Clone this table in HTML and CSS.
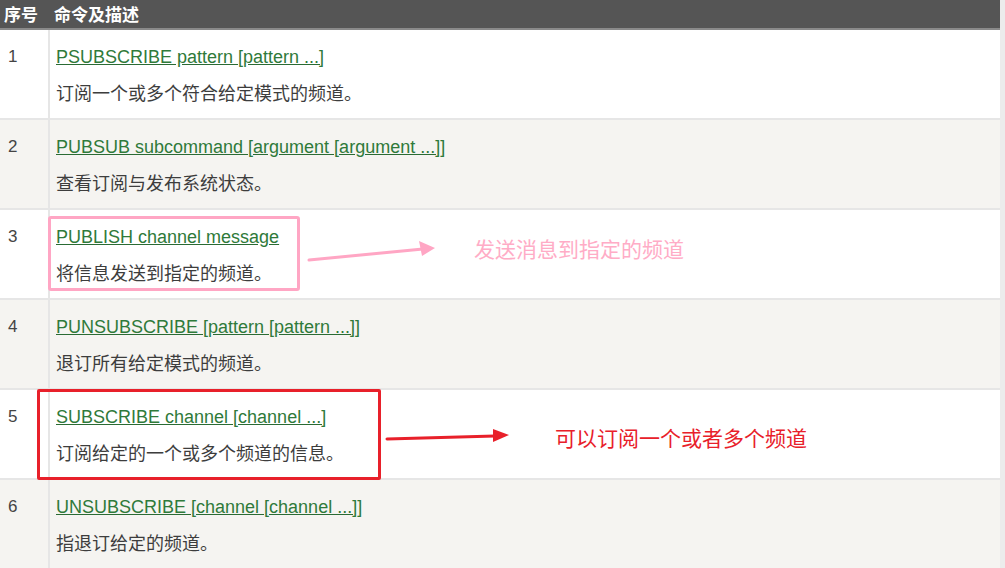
FILE: index.html
```html
<!DOCTYPE html>
<html lang="zh">
<head>
<meta charset="utf-8">
<link rel="stylesheet" href="styles.css">
</head>
<body>
<div class="page">
  <table class="cmds">
    <thead>
      <tr><th class="num">序号</th><th>命令及描述</th></tr>
    </thead>
    <tbody>
      <tr><td class="num">1</td><td><a href="#">PSUBSCRIBE pattern [pattern ...]</a><p>订阅一个或多个符合给定模式的频道。</p></td></tr>
      <tr class="alt"><td class="num">2</td><td><a href="#">PUBSUB subcommand [argument [argument ...]]</a><p>查看订阅与发布系统状态。</p></td></tr>
      <tr><td class="num">3</td><td><a href="#">PUBLISH channel message</a><p>将信息发送到指定的频道。</p></td></tr>
      <tr class="alt"><td class="num">4</td><td><a href="#">PUNSUBSCRIBE [pattern [pattern ...]]</a><p>退订所有给定模式的频道。</p></td></tr>
      <tr><td class="num">5</td><td><a href="#">SUBSCRIBE channel [channel ...]</a><p>订阅给定的一个或多个频道的信息。</p></td></tr>
      <tr class="alt"><td class="num">6</td><td><a href="#">UNSUBSCRIBE [channel [channel ...]]</a><p>指退订给定的频道。</p></td></tr>
    </tbody>
  </table>

  <div class="note pink-box"></div>
  <svg class="note pink-arrow" width="140" height="30" viewBox="0 0 140 30">
    <line x1="2" y1="24" x2="116" y2="13" stroke="#ffa6c4" stroke-width="3" stroke-linecap="round"/>
    <polygon points="128,12 112,5 115,20" fill="#ffa6c4"/>
  </svg>
  <div class="note pink-text">发送消息到指定的频道</div>

  <div class="note red-box"></div>
  <svg class="note red-arrow" width="130" height="20" viewBox="0 0 130 20">
    <line x1="2" y1="12" x2="110" y2="9" stroke="#e8202a" stroke-width="3" stroke-linecap="round"/>
    <polygon points="124,8 108,2 108,15" fill="#e8202a"/>
  </svg>
  <div class="note red-text">可以订阅一个或者多个频道</div>
</div>
</body>
</html>
```
FILE: styles.css
```css
html, body {
  margin: 0;
  padding: 0;
  background: #ececec;
}
.page {
  position: relative;
  width: 1005px;
  height: 568px;
  overflow: hidden;
  font-family: "Liberation Sans", Arial, "Noto Sans CJK SC", sans-serif;
}
.cmds {
  width: 1000px;
  border-collapse: collapse;
  table-layout: fixed;
  background: #fff;
}
.cmds th {
  background: #555555;
  color: #fff;
  font-weight: bold;
  font-size: 17px;
  text-align: left;
  height: 28px;
  padding: 0 0 0 5px;
  border-bottom: 2px solid #8a8a8a;
  font-family: "Noto Sans CJK SC", sans-serif;
  line-height: 28px;
}
.cmds th.num {
  width: 45px;
  padding-left: 4px;
}
.cmds td {
  height: 90px;
  box-sizing: border-box;
  vertical-align: top;
  padding: 17px 6px 0 6px;
  border-bottom: 2px solid #e6e6e6;
  border-left: 2px solid #e6e6e6;
  color: #333;
}
.cmds td.num {
  border-left: none;
  padding-left: 8px;
  font-size: 17px;
  line-height: 20px;
  color: #444;
}
.cmds tr.alt td {
  background: #f5f4f1;
}
.cmds a {
  display: block;
  color: #2f7a3a;
  font-size: 18px;
  line-height: 20px;
  text-decoration: underline;
  text-decoration-color: #2a6b34;
}
.cmds p {
  margin: 14px 0 0 0;
  font-size: 18px;
  line-height: 22px;
  color: #3d3d3d;
  font-family: "Noto Sans CJK SC", sans-serif;
}
.note {
  position: absolute;
}
.pink-box {
  left: 48px;
  top: 216px;
  width: 246px;
  height: 69px;
  border: 3px solid #ffa6c4;
  border-radius: 3px;
}
.pink-arrow {
  left: 307px;
  top: 236px;
}
.pink-text {
  left: 474px;
  top: 235px;
  font-size: 21px;
  line-height: 26px;
  color: #ffacc6;
  font-family: "Noto Sans CJK SC", sans-serif;
}
.red-box {
  left: 37px;
  top: 389px;
  width: 338px;
  height: 85px;
  border: 3px solid #e8202a;
  border-radius: 2px;
}
.red-arrow {
  left: 385px;
  top: 427px;
}
.red-text {
  left: 555px;
  top: 424px;
  font-size: 21px;
  line-height: 26px;
  color: #e8202a;
  font-family: "Noto Sans CJK SC", sans-serif;
}
```
